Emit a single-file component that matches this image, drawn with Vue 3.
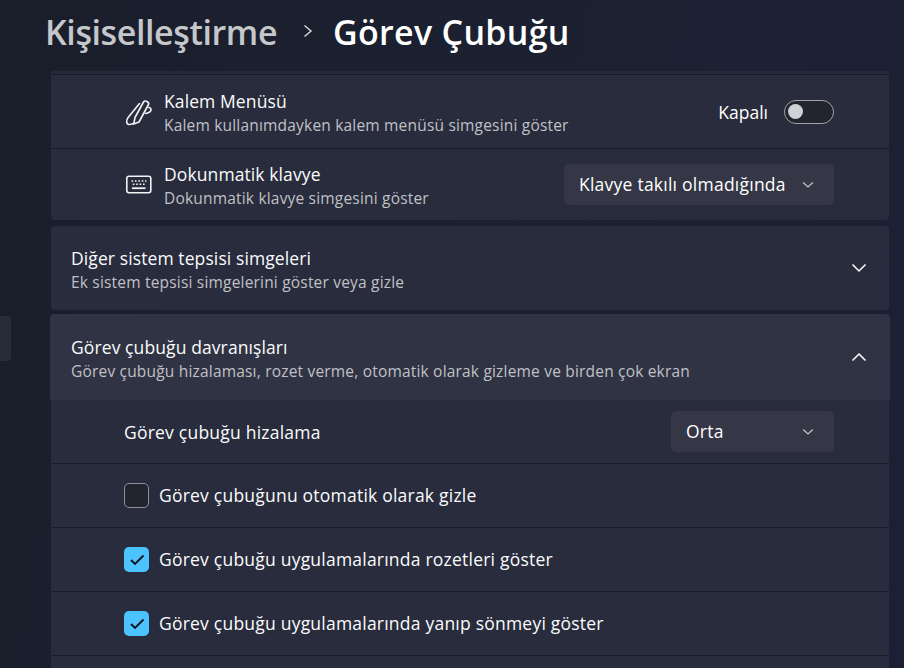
<template>
  <div class="page">
    <div class="side-pill"></div>

    <header class="crumbs">
      <span class="crumb-parent">Kişiselleştirme</span>
      <svg class="crumb-sep" width="12" height="16" viewBox="0 0 12 16">
        <path d="M2.5 2.5L9 8l-6.5 5.5" fill="none" stroke="#d4d5da" stroke-width="1.5" />
      </svg>
      <span class="crumb-current">Görev Çubuğu</span>
    </header>

    <main class="content">
      <section class="card first">
        <div class="row pen-row">
          <svg class="row-icon" width="28" height="28" viewBox="0 0 28 28" fill="none" stroke="#f2f3f5" stroke-width="1.6" stroke-linecap="round" stroke-linejoin="round">
            <path d="M11 19.5L19.5 4C21 1.8 25.5 4 24.5 6.5L15 24 9.7 26z" />
            <path d="M15.5 5.5L4.5 19C2 22 2 26 5 26.5C6.5 26.7 8 26 9.5 25.5" />
            <path d="M25 9.5C28.2 10.5 28 14.5 21.5 15.5" />
          </svg>
          <div class="texts">
            <div class="title">Kalem Menüsü</div>
            <div class="sub">Kalem kullanımdayken kalem menüsü simgesini göster</div>
          </div>
          <span class="toggle-label">Kapalı</span>
          <span class="toggle"><span class="knob"></span></span>
        </div>
        <div class="row keyboard-row">
          <svg class="row-icon" width="28" height="28" viewBox="0 0 28 28" fill="none">
            <rect x="2.8" y="5.3" width="24" height="16.4" rx="2.2" stroke="#f2f3f5" stroke-width="1.6" />
            <path d="M7.5 10h1.6M10.9 10h1.6M14.3 10h1.6M17.7 10h1.6M21 10h1.4M8.8 13.2h1.6M12.2 13.2h1.6M15.6 13.2h1.6M19 13.2h1.6" stroke="#f2f3f5" stroke-width="1.5" />
            <path d="M8 17.2h13.5" stroke="#f2f3f5" stroke-width="1.8" />
          </svg>
          <div class="texts">
            <div class="title">Dokunmatik klavye</div>
            <div class="sub">Dokunmatik klavye simgesini göster</div>
          </div>
          <div class="select wide">
            <span class="select-text">Klavye takılı olmadığında</span>
            <svg width="12" height="8" viewBox="0 0 12 8"><path d="M1.2 1.5L6 6l4.8-4.5" fill="none" stroke="#c9cad0" stroke-width="1.1" /></svg>
          </div>
        </div>
      </section>

      <section class="card expander">
        <div class="exp-head">
          <div class="texts">
            <div class="title">Diğer sistem tepsisi simgeleri</div>
            <div class="sub">Ek sistem tepsisi simgelerini göster veya gizle</div>
          </div>
          <svg width="16" height="10" viewBox="0 0 16 10"><path d="M1.5 1.5L8 8l6.5-6.5" fill="none" stroke="#fff" stroke-width="1.5" /></svg>
        </div>
      </section>

      <section class="card open">
        <div class="exp-head active">
          <div class="texts">
            <div class="title">Görev çubuğu davranışları</div>
            <div class="sub">Görev çubuğu hizalaması, rozet verme, otomatik olarak gizleme ve birden çok ekran</div>
          </div>
          <svg width="16" height="10" viewBox="0 0 16 10"><path d="M1.5 8.5L8 2l6.5 6.5" fill="none" stroke="#fff" stroke-width="1.5" /></svg>
        </div>
        <div class="opt select-row">
          <span class="opt-label">Görev çubuğu hizalama</span>
          <div class="select narrow">
            <span class="select-text">Orta</span>
            <svg width="12" height="8" viewBox="0 0 12 8"><path d="M1.2 1.5L6 6l4.8-4.5" fill="none" stroke="#c9cad0" stroke-width="1.1" /></svg>
          </div>
        </div>
        <div v-for="item in options" :key="item.label" class="opt">
          <span class="check" :class="{ on: item.checked }">
            <svg v-if="item.checked" width="16" height="12" viewBox="0 0 16 12"><path d="M2 6l4 4 8.5-8.5" fill="none" stroke="#10131a" stroke-width="1.8" /></svg>
          </span>
          <span class="opt-label lifted">{{ item.label }}</span>
        </div>
        <div class="opt"></div>
      </section>
    </main>
  </div>
</template>

<script setup>
const options = [
  { label: 'Görev çubuğunu otomatik olarak gizle', checked: false },
  { label: 'Görev çubuğu uygulamalarında rozetleri göster', checked: true },
  { label: 'Görev çubuğu uygulamalarında yanıp sönmeyi göster', checked: true }
]
</script>

<style>
html, body {
  margin: 0;
  background: #1b2031;
  overflow: hidden;
}
</style>

<style scoped>
.page {
  position: relative;
  width: 904px;
  height: 668px;
  overflow: hidden;
  background: linear-gradient(100deg, #1a1e2b 0%, #1c2132 60%, #1c2034 100%);
  font-family: "Open Sans", "Noto Sans", sans-serif;
  color: #fff;
}

.side-pill {
  position: absolute;
  left: 0;
  top: 316px;
  width: 11px;
  height: 45px;
  background: #282c39;
  border-radius: 0 4px 4px 0;
}

.crumbs {
  display: flex;
  align-items: center;
  height: 71px;
  padding: 0 0 6px 45px;
  box-sizing: border-box;
}

.crumb-parent,
.crumb-current {
  font-size: 34px;
  font-weight: 600;
  line-height: 65px;
}

.crumb-parent {
  color: #c6c7cb;
  letter-spacing: -0.4px;
}

.crumb-current {
  letter-spacing: 0.3px;
}

.crumb-sep {
  margin: 0 19px 4px 25px;
}

.content {
  display: flex;
  flex-direction: column;
  width: 838px;
  margin-left: 51px;
}

.card {
  background: #282c3c;
  border-radius: 4px;
}

.first {
  border-top: 3px solid #262a38;
  border-radius: 0 0 4px 4px;
  box-sizing: border-box;
  height: 149px;
}

.row {
  display: flex;
  align-items: center;
  padding: 0 55px 0 73px;
  border-top: 1px solid #161a25;
}

.pen-row {
  height: 73px;
}

.keyboard-row {
  height: 71px;
}

.row-icon {
  flex: none;
  margin-right: 12px;
}

.texts {
  flex: 1;
  min-width: 0;
  padding-top: 1px;
}

.title {
  font-size: 17.5px;
  line-height: 24px;
  letter-spacing: 0.1px;
  color: #fbfbfc;
}

.sub {
  margin-top: 1px;
  font-size: 15.5px;
  line-height: 22px;
  letter-spacing: 0.19px;
  color: #c0c1c6;
}

.toggle-label {
  font-size: 17.5px;
  margin-right: 16px;
}

.toggle {
  display: flex;
  align-items: center;
  width: 50px;
  height: 24px;
  box-sizing: border-box;
  border: 1px solid #a3a4a9;
  border-radius: 12px;
  background: #22252f;
  padding-left: 3px;
}

.knob {
  width: 15px;
  height: 15px;
  border-radius: 50%;
  background: #d0d1d6;
}

.select {
  display: flex;
  align-items: center;
  justify-content: space-between;
  box-sizing: border-box;
  height: 41px;
  padding: 0 20px 0 15px;
  background: #353746;
  border-radius: 5px;
  font-size: 17.5px;
}

.select-text {
  letter-spacing: 0.24px;
  padding-bottom: 2px;
}

.wide {
  width: 270px;
}

.narrow {
  width: 163px;
}

.expander {
  height: 84px;
  margin-top: 6px;
}

.exp-head {
  display: flex;
  align-items: center;
  padding: 0 22px 0 20px;
  height: 84px;
}

.exp-head .texts {
  padding-top: 2px;
}

.exp-head.active {
  height: 86px;
  margin: 0 -1px;
  padding: 0 23px 0 21px;
  background: #2f3343;
  border-radius: 4px 4px 0 0;
}

.open {
  margin-top: 4px;
}

.opt {
  display: flex;
  align-items: center;
  height: 63px;
  padding: 0 55px 0 73px;
  border-bottom: 1px solid #181c29;
}

.select-row {
  justify-content: space-between;
}

.opt-label {
  font-size: 17.5px;
  letter-spacing: 0.22px;
  color: #fbfbfc;
}

.lifted {
  padding-bottom: 2px;
}

.check {
  display: flex;
  align-items: center;
  justify-content: center;
  box-sizing: border-box;
  width: 25px;
  height: 25px;
  margin-right: 10px;
  border-radius: 5px;
  border: 1px solid #8f9095;
  background: #22252f;
}

.check.on {
  border: none;
  background: #4cc2ff;
}
</style>
